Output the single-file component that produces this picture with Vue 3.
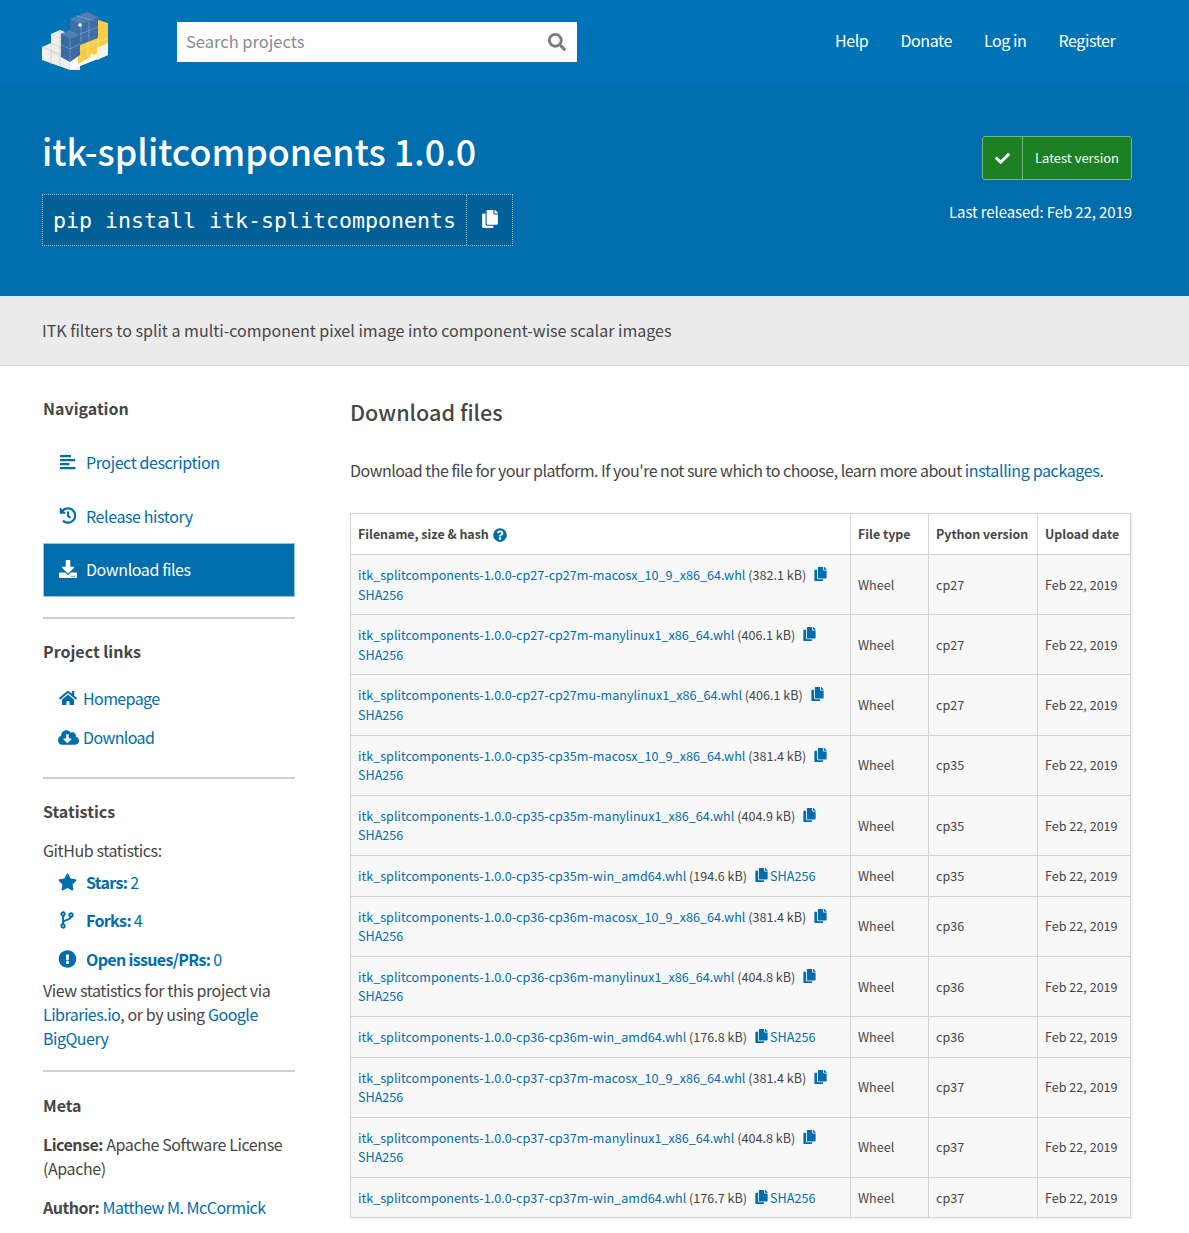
<template>
  <div class="page">
    <header class="topbar">
      <div class="logo">
        <svg width="66" height="60" viewBox="0 0 66 60">
          <polygon points="0,37 9,33 9,24 18,20 28,24 38,30 38,60 28,60 0,50" fill="#efefeb" />
          <path d="M0 37l28 11v12M9 33l19 8M9 24l19 8M9 33v21M18 20v36M9 42l19 8" fill="none" stroke="#c9c9c5" stroke-width=".7" />
          <polygon points="28,60 66,45 66,33 28,48" fill="#fff" />
          <polygon points="50,8 66,13 66,37 36,54 36,28" fill="#f8cd44" />
          <polygon points="55,38 66,33 66,45 55,50" fill="#f4f4f0" />
          <path d="M46 30v21M56 26v24M36 40l30-12" fill="none" stroke="#ffe28a" stroke-width=".7" />
          <polygon points="28,9 45,2 56,7 56,28 38,35 38,25 28,20" fill="#3b6fa6" />
          <polygon points="28,9 45,2 56,7 39,14" fill="#4f80b4" />
          <polygon points="19,24 28,20 38,25 38,45 28,52 19,47" fill="#376ba1" />
          <polygon points="19,24 28,20 38,25 28,29" fill="#4f80b4" />
          <path d="M39 14v18M47 11v21M28 29v23M19 35l9 4 10-5M38 24l18-7M34 5.500l17 5" fill="none" stroke="#7ea3cb" stroke-width=".7" />
          <circle cx="38" cy="15" r="1.800" fill="#fff" />
          <circle cx="50" cy="45" r="1.600" fill="#fff" />
        </svg>
      </div>
      <div class="search">
        <span class="placeholder">Search projects</span>
        <svg class="search-icon" width="18" height="18" viewBox="0 0 512 512">
          <path fill="#7c7c7c" d="M505 442.700L405.300 343c-4.500-4.500-10.600-7-17-7H372c27.600-35.300 44-79.700 44-128C416 93.100 322.900 0 208 0S0 93.100 0 208s93.100 208 208 208c48.300 0 92.700-16.400 128-44v16.300c0 6.400 2.500 12.500 7 17l99.700 99.700c9.400 9.400 24.600 9.400 33.900 0l28.300-28.300c9.400-9.400 9.400-24.600.1-34zM208 336c-70.700 0-128-57.200-128-128 0-70.700 57.200-128 128-128 70.700 0 128 57.200 128 128 0 70.700-57.200 128-128 128z" />
        </svg>
      </div>
      <nav class="topnav">
        <a v-for="l in topLinks" :key="l">{{ l }}</a>
      </nav>
    </header>

    <section class="banner">
      <div class="banner-left">
        <h1>itk-splitcomponents 1.0.0</h1>
        <div class="pip">
          <span class="pip-cmd">pip install itk-splitcomponents</span>
          <span class="pip-copy">
            <svg width="16" height="18" viewBox="0 0 448 512"><path fill="#fff" :d="copyPath" /></svg>
          </span>
        </div>
      </div>
      <div class="banner-right">
        <div class="latest">
          <span class="latest-check">
            <svg width="15" height="15" viewBox="0 0 512 512"><path fill="#fff" d="M173.900 439.400l-166.400-166.400c-10-10-10-26.200 0-36.200l36.200-36.200c10-10 26.200-10 36.200 0L192 312.700 432.100 72.600c10-10 26.200-10 36.200 0l36.200 36.200c10 10 10 26.200 0 36.200l-294.400 294.400c-10 10-26.200 10-36.200 0z" /></svg>
          </span>
          <span class="latest-text">Latest version</span>
        </div>
        <p class="released">Last released: Feb 22, 2019</p>
      </div>
    </section>

    <section class="summary">
      <p>ITK filters to split a multi-component pixel image into component-wise scalar images</p>
    </section>

    <main class="main">
      <aside class="side">
        <h3 class="side-head first">Navigation</h3>
        <ul class="side-nav">
          <li>
            <a>
              <svg width="16" height="16" viewBox="0 0 16 16"><path fill="#006dad" d="M0 1h11v2.200H0zM0 5h15v2.200H0zM0 9h9.500v2.200H0zM0 13h15.500v2.200H0z" /></svg>
              Project description
            </a>
          </li>
          <li>
            <a>
              <svg width="17" height="17" viewBox="0 0 512 512"><path fill="#006dad" d="M504 255.500c.3 136.600-111.200 248.400-247.800 248.500-59 0-113.200-20.500-155.800-54.900-11.100-8.900-11.900-25.500-1.800-35.600l11.300-11.300c8.600-8.600 22.400-9.600 31.900-2C173.100 425.100 212.800 440 256 440c101.700 0 184-82.300 184-184 0-101.700-82.300-184-184-184-48.800 0-93.100 19-126.100 49.900l50.800 50.800c10.100 10.100 2.900 27.300-11.300 27.300H24c-8.800 0-16-7.200-16-16V38.600c0-14.300 17.200-21.400 27.300-11.300l49.400 49.400C129.200 34.100 189.600 8 256 8c136.800 0 247.700 110.800 248 247.500zm-180.900 78.800l9.800-12.600c8.100-10.500 6.300-25.500-4.200-33.700L288 256.300V152c0-13.300-10.700-24-24-24h-16c-13.300 0-24 10.700-24 24v135.700l65.400 50.900c10.500 8.100 25.500 6.300 33.700-4.200z" /></svg>
              Release history
            </a>
          </li>
          <li class="active">
            <a>
              <svg width="18" height="18" viewBox="0 0 512 512"><path fill="#fff" d="M216 0h80c13.300 0 24 10.700 24 24v168h87.700c17.800 0 26.700 21.500 14.100 34.100L269.700 378.300c-7.500 7.500-19.800 7.500-27.300 0L90.100 226.100c-12.600-12.600-3.700-34.100 14.100-34.100H192V24c0-13.300 10.700-24 24-24zm296 376v112c0 13.300-10.700 24-24 24H24c-13.300 0-24-10.700-24-24V376c0-13.300 10.700-24 24-24h146.700l49 49c20.100 20.100 52.500 20.100 72.600 0l49-49H488c13.300 0 24 10.700 24 24zm-124 88c0-11-9-20-20-20s-20 9-20 20 9 20 20 20 20-9 20-20zm64 0c0-11-9-20-20-20s-20 9-20 20 9 20 20 20 20-9 20-20z" /></svg>
              Download files
            </a>
          </li>
        </ul>
        <hr class="rule nav-rule" />

        <h3 class="side-head">Project links</h3>
        <ul class="side-links">
          <li>
            <svg width="20" height="16" viewBox="0 0 576 512"><path fill="#006dad" d="M280.400 148.300L96 300.100V464a16 16 0 0 0 16 16l112.100-.3a16 16 0 0 0 15.900-16V368a16 16 0 0 1 16-16h64a16 16 0 0 1 16 16v95.600a16 16 0 0 0 16 16.100L464 480a16 16 0 0 0 16-16V300L295.700 148.300a12.200 12.200 0 0 0-15.300 0zM571.600 251.500L488 182.600V44.100a12 12 0 0 0-12-12h-56a12 12 0 0 0-12 12v72.600L318.500 43a48 48 0 0 0-61 0L4.300 251.500a12 12 0 0 0-1.600 16.900l25.500 31A12 12 0 0 0 45.200 301l235.200-193.700a12.200 12.200 0 0 1 15.300 0L530.900 301a12 12 0 0 0 16.900-1.600l25.500-31a12 12 0 0 0-1.700-16.900z" /></svg>
            <a>Homepage</a>
          </li>
          <li>
            <svg class="cloud" width="21" height="17" viewBox="0 0 640 512"><path fill="#006dad" d="M537.600 226.600c4.100-10.700 6.400-22.400 6.400-34.600 0-53-43-96-96-96-19.700 0-38.100 6-53.300 16.200C367 64.200 315.300 32 256 32c-88.400 0-160 71.600-160 160 0 2.700.1 5.400.2 8.100C40.200 219.800 0 273.200 0 336c0 79.500 64.500 144 144 144h368c70.700 0 128-57.300 128-128 0-61.900-44-113.600-102.400-125.400zm-132.900 88.700L299.300 420.700c-6.200 6.200-16.400 6.200-22.600 0L171.300 315.300c-10.100-10.100-2.900-27.300 11.300-27.300H248V176c0-8.800 7.200-16 16-16h48c8.800 0 16 7.200 16 16v112h65.400c14.200 0 21.400 17.200 11.300 27.300z" /></svg>
            <a>Download</a>
          </li>
        </ul>
        <hr class="rule" />

        <h3 class="side-head">Statistics</h3>
        <p class="gh">GitHub statistics:</p>
        <ul class="stats">
          <li>
            <svg width="19" height="18" viewBox="0 0 576 512"><path fill="#006dad" d="M259.300 17.800L194 150.200 47.900 171.500c-26.200 3.800-36.700 36.100-17.700 54.600l105.700 103-25 145.500c-4.500 26.300 23.200 46 46.400 33.700L288 439.600l130.700 68.700c23.200 12.200 50.900-7.400 46.400-33.700l-25-145.500 105.700-103c19-18.500 8.500-50.800-17.700-54.600L382 150.200 316.700 17.800c-11.700-23.600-45.600-23.900-57.400 0z" /></svg>
            <a><b>Stars:</b> 2</a>
          </li>
          <li>
            <svg class="fork" width="19" height="18" viewBox="0 0 19 18"><g fill="none" stroke="#006dad" stroke-width="1.900"><circle cx="5" cy="3" r="1.700" /><circle cx="5" cy="15" r="1.700" /><circle cx="13" cy="4" r="1.700" /><path d="M5 4.700v8.600M13 5.700c0 3.800-8 2.500-8 6" /></g></svg>
            <a><b>Forks:</b> 4</a>
          </li>
          <li>
            <svg width="19" height="18" viewBox="0 0 512 512"><path fill="#006dad" d="M504 256c0 137-111 248-248 248S8 393 8 256 119 8 256 8s248 111 248 248zm-248 50c-25.400 0-46 20.600-46 46s20.600 46 46 46 46-20.600 46-46-20.600-46-46-46zm-43.700-165.300l7.400 136c.3 6.400 5.600 11.300 12 11.300h48.500c6.400 0 11.600-5 12-11.300l7.400-136c.4-6.900-5.100-12.700-12-12.700h-63.400c-6.900 0-12.400 5.800-12 12.700z" /></svg>
            <a><b>Open issues/PRs:</b> 0</a>
          </li>
        </ul>
        <p class="via">View statistics for this project via <a>Libraries.io</a>, or by using <a>Google BigQuery</a></p>
        <hr class="rule via-rule" />

        <h3 class="side-head">Meta</h3>
        <p class="meta"><b>License:</b> Apache Software License (Apache)</p>
        <p class="meta"><b>Author:</b> <a>Matthew M. McCormick</a></p>
      </aside>

      <div class="content">
        <h2>Download files</h2>
        <p class="lead">Download the file for your platform. If you're not sure which to choose, learn more about <a>installing packages</a>.</p>
        <table class="files">
          <colgroup>
            <col style="width: 500px" />
            <col style="width: 78px" />
            <col style="width: 109px" />
            <col style="width: 93px" />
          </colgroup>
          <thead>
            <tr>
              <th>
                Filename, size &amp; hash
                <svg class="help" width="14" height="14" viewBox="0 0 512 512"><path fill="#006dad" d="M504 256c0 137-111 248-248 248S8 393 8 256 119 8 256 8s248 111 248 248zM262.700 90c-54.500 0-89.300 23-116.600 63.800-3.500 5.300-2.400 12.400 2.700 16.300l34.700 26.300c5.200 3.900 12.600 3 16.700-2.100 17.900-22.700 30.100-35.800 57.300-35.800 20.400 0 45.700 13.100 45.700 33 0 15-12.400 22.700-32.600 34-23.600 13.200-54.800 29.700-54.800 70.900V302c0 6.600 5.400 12 12 12h56c6.600 0 12-5.400 12-12v-1.300c0-28.600 83.400-29.700 83.400-107 0-58.100-60.300-102.100-116.800-102.100zM256 338.900c-25.400 0-46.100 20.700-46.100 46.100 0 25.400 20.700 46.100 46.100 46.100s46.100-20.700 46.100-46.100c0-25.400-20.700-46.100-46.100-46.100z" /></svg>
              </th>
              <th>File type</th>
              <th>Python version</th>
              <th>Upload date</th>
            </tr>
          </thead>
          <tbody>
            <tr v-for="f in files" :key="f.name">
              <td>
                <a>{{ f.name }}</a>
                {{ ' ' }}<span class="size">({{ f.size }})</span>
                <svg class="copy" width="13" height="14" viewBox="0 0 448 512"><path fill="#006dad" :d="copyPath" /></svg>
                <br v-if="!f.win" />
                <a>SHA256</a>
              </td>
              <td>Wheel</td>
              <td>{{ f.py }}</td>
              <td>Feb 22, 2019</td>
            </tr>
          </tbody>
        </table>
      </div>
    </main>
  </div>
</template>

<script setup>
const topLinks = ['Help', 'Donate', 'Log in', 'Register']

// font-awesome style "copy" shape, used in the pip box and in every table row
const copyPath = 'M320 448v40c0 13.300-10.700 24-24 24H24c-13.300 0-24-10.700-24-24V120c0-13.300 10.700-24 24-24h72v296c0 30.900 25.100 56 56 56h168zm0-344V0H152c-13.300 0-24 10.700-24 24v368c0 13.300 10.700 24 24 24h272c13.300 0 24-10.700 24-24V128H344c-13.200 0-24-10.800-24-24zm121-31L375 7c-4.500-4.500-10.600-7-17-7h-6v96h96v-6.100c0-6.400-2.500-12.500-7-17z'

const prefix = 'itk_splitcomponents-1.0.0-'
const files = [
  { name: 'cp27-cp27m-macosx_10_9_x86_64.whl', size: '382.1 kB', py: 'cp27' },
  { name: 'cp27-cp27m-manylinux1_x86_64.whl', size: '406.1 kB', py: 'cp27' },
  { name: 'cp27-cp27mu-manylinux1_x86_64.whl', size: '406.1 kB', py: 'cp27' },
  { name: 'cp35-cp35m-macosx_10_9_x86_64.whl', size: '381.4 kB', py: 'cp35' },
  { name: 'cp35-cp35m-manylinux1_x86_64.whl', size: '404.9 kB', py: 'cp35' },
  { name: 'cp35-cp35m-win_amd64.whl', size: '194.6 kB', py: 'cp35', win: true },
  { name: 'cp36-cp36m-macosx_10_9_x86_64.whl', size: '381.4 kB', py: 'cp36' },
  { name: 'cp36-cp36m-manylinux1_x86_64.whl', size: '404.8 kB', py: 'cp36' },
  { name: 'cp36-cp36m-win_amd64.whl', size: '176.8 kB', py: 'cp36', win: true },
  { name: 'cp37-cp37m-macosx_10_9_x86_64.whl', size: '381.4 kB', py: 'cp37' },
  { name: 'cp37-cp37m-manylinux1_x86_64.whl', size: '404.8 kB', py: 'cp37' },
  { name: 'cp37-cp37m-win_amd64.whl', size: '176.7 kB', py: 'cp37', win: true }
].map((f) => ({ ...f, name: prefix + f.name }))
</script>

<style scoped>
.page {
  font-family: "Noto Sans CJK JP", "Noto Sans", sans-serif;
  color: #464646;
  background: #fff;
  width: 1189px;
  height: 1233px;
  overflow: hidden;
}

a {
  color: #006dad;
  text-decoration: none;
}

.topbar {
  height: 84px;
  background: #0073b7;
  display: flex;
  align-items: center;
  padding-left: 42px;
  box-sizing: border-box;
}

.logo {
  width: 135px;
  height: 60px;
  margin-top: -4px;
}

.search {
  width: 400px;
  height: 40px;
  background: #fff;
  margin-top: -1px;
  display: flex;
  align-items: center;
  justify-content: space-between;
  padding: 0 11px 0 9px;
  box-sizing: border-box;
}

.placeholder {
  font-size: 16.500px;
  color: #8a8a8a;
  margin-bottom: 2px;
}

.topnav {
  display: flex;
  gap: 32px;
  margin-left: 258px;
  margin-top: -4px;
}

.topnav a {
  color: #fff;
  font-size: 16px;
  letter-spacing: -.4px;
}

.banner {
  height: 212px;
  background: #006dad;
  padding: 0 57px 0 42px;
  display: flex;
  justify-content: space-between;
  color: #fff;
}

h1 {
  font-size: 35.800px;
  font-weight: 500;
  line-height: 48px;
  margin: 42px 0 20px;
}

.pip {
  display: inline-flex;
  height: 52px;
  box-sizing: border-box;
  border: 1px dotted #8fc0dd;
  background: #005f96;
}

.pip-cmd {
  font-family: "DejaVu Sans Mono", monospace;
  font-size: 21.600px;
  line-height: 52px;
  padding: 0 10px;
}

.pip-copy {
  width: 46px;
  border-left: 1px dotted #8fc0dd;
  display: flex;
  align-items: center;
  justify-content: center;
  padding-bottom: 2px;
  box-sizing: border-box;
}

.banner-right {
  display: flex;
  flex-direction: column;
  align-items: flex-end;
  padding-top: 52px;
}

.latest {
  display: flex;
  width: 150px;
  height: 44px;
  box-sizing: border-box;
  border: 1px solid #6fb57c;
  border-radius: 3px;
  background: #1b8123;
  font-size: 13px;
}

.latest-check {
  width: 40px;
  box-sizing: border-box;
  border-right: 1px solid #6fb57c;
  display: flex;
  align-items: center;
  justify-content: center;
}

.latest-text {
  flex: 1;
  line-height: 42px;
  text-align: center;
}

.released {
  margin: 20px 0 0;
  font-size: 15px;
  letter-spacing: -.1px;
  line-height: 24px;
  white-space: nowrap;
}

.summary {
  height: 70px;
  background: #ebebeb;
  border-bottom: 1px solid #dcdcdc;
  box-sizing: border-box;
  padding: 0 0 2px 42px;
  display: flex;
  align-items: center;
}

.summary p {
  margin: 0;
  font-size: 16.050px;
  color: #464646;
}

.main {
  display: flex;
  padding-left: 43px;
}

.side {
  width: 252px;
  flex: none;
  font-size: 16px;
  letter-spacing: -.4px;
  line-height: 24px;
}

.side-head {
  margin: 0;
  font-size: 16px;
  letter-spacing: 0;
  font-weight: 600;
  line-height: 24px;
  color: #464646;
}

.side-head.first {
  margin-top: 30px;
}

ul {
  list-style: none;
  margin: 0;
  padding: 0;
}

.side-nav {
  margin-top: 16px;
}

.side-nav li {
  height: 53.500px;
  box-sizing: border-box;
}

.side-nav a {
  display: flex;
  align-items: center;
  gap: 9px;
  height: 100%;
  padding: 0 0 1px 16px;
  box-sizing: border-box;
}

.side-nav svg {
  width: 18px;
  flex: none;
}

.side-nav .active {
  background: #006dad;
  border: 1px solid #8fc6e6;
}

.side-nav .active a {
  color: #fff;
  padding-left: 15px;
}

.rule {
  border: 0;
  height: 2px;
  background: #cfcfcf;
  margin: 20px 0;
}

.side-links {
  margin-top: 16px;
  letter-spacing: -.6px;
}

.side-links li {
  display: flex;
  align-items: center;
  gap: 5px;
  height: 39px;
  padding-left: 15px;
}

.side-links li .cloud {
  margin-right: -1px;
}

.gh {
  margin: 15px 0 0;
}

.stats {
  margin-top: 1px;
}

.stats li {
  display: flex;
  align-items: center;
  gap: 9px;
  height: 38.500px;
  padding-left: 15px;
  letter-spacing: -.65px;
}

.stats b {
  font-weight: 600;
}

.via {
  margin: 0;
}

.via a {
  letter-spacing: -.5px;
}

.via-rule {
  margin: 20px 0 21px;
}

.meta {
  margin: 15px 0 0;
}

.meta b {
  font-weight: 600;
  letter-spacing: -.5px;
}

.meta a {
  letter-spacing: -.5px;
}

.content {
  margin-left: 55px;
  width: 781px;
  flex: none;
}

h2 {
  font-size: 21.600px;
  font-weight: 500;
  line-height: 32px;
  margin: 30px 0 0;
  color: #464646;
}

.lead {
  margin: 30px 0 0;
  font-size: 16px;
  letter-spacing: -.5px;
  line-height: 24px;
}

.lead a {
  letter-spacing: -.36px;
}

.files {
  margin-top: 31px;
  width: 780px;
  table-layout: fixed;
  border-collapse: collapse;
  box-shadow: 1px 1px 2px 1px rgba(0, 0, 0, .05);
  font-size: 12.600px;
  line-height: 19.600px;
}

th,
td {
  border: 1px solid #d3d3d3;
  padding: 10px 7px;
  text-align: left;
  vertical-align: middle;
}

th {
  background: #fff;
  font-weight: 600;
  font-size: 12.400px;
  white-space: nowrap;
  height: 20px;
  padding: 11px 7px 9px;
}

td {
  background: #f8f8f8;
}

.help {
  vertical-align: -3px;
  margin-left: 1px;
}

.size {
  color: #464646;
}

.copy {
  margin: 0 2px 0 8px;
  vertical-align: -1px;
}
</style>

<style>
body {
  background: #fff;
}
</style>
